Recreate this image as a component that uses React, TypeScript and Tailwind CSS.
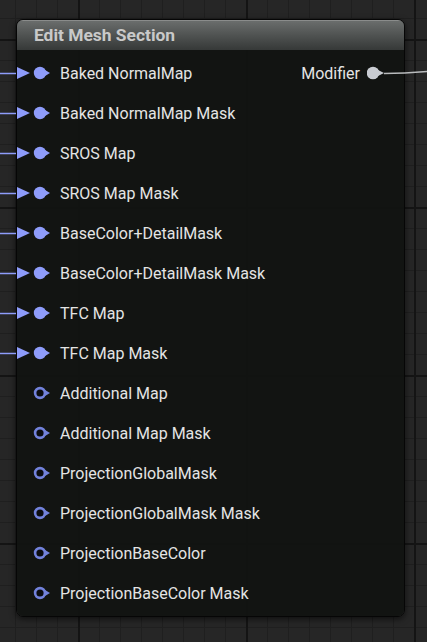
import React from 'react';

type Pin = { label: string; linked: boolean };

const pins: Pin[] = [
  { label: 'Baked NormalMap', linked: true },
  { label: 'Baked NormalMap Mask', linked: true },
  { label: 'SROS Map', linked: true },
  { label: 'SROS Map Mask', linked: true },
  { label: 'BaseColor+DetailMask', linked: true },
  { label: 'BaseColor+DetailMask Mask', linked: true },
  { label: 'TFC Map', linked: true },
  { label: 'TFC Map Mask', linked: true },
  { label: 'Additional Map', linked: false },
  { label: 'Additional Map Mask', linked: false },
  { label: 'ProjectionGlobalMask', linked: false },
  { label: 'ProjectionGlobalMask Mask', linked: false },
  { label: 'ProjectionBaseColor', linked: false },
  { label: 'ProjectionBaseColor Mask', linked: false },
];

const PIN = '#8e9cfb';

// grid canvas behind the node
const GraphGrid: React.FC = () => (
  <svg className="absolute inset-0" width="427" height="642">
    <defs>
      <pattern id="minor" width="21" height="21" x="15" y="18" patternUnits="userSpaceOnUse">
        <rect width="21" height="1" fill="#1f1f1f" />
        <rect width="1" height="21" fill="#1f1f1f" />
      </pattern>
      <pattern id="major" width="168" height="168" x="78" y="39" patternUnits="userSpaceOnUse">
        <rect width="168" height="2" fill="#141414" />
        <rect width="2" height="168" fill="#141414" />
      </pattern>
    </defs>
    <rect width="427" height="642" fill="#262626" />
    <rect width="427" height="642" fill="url(#minor)" />
    <rect width="427" height="642" fill="url(#major)" />
  </svg>
);

// wires drawn over the node
const Wires: React.FC = () => (
  <svg className="absolute inset-0 pointer-events-none" width="427" height="642">
    {pins.map((p, i) =>
      p.linked ? (
        <line key={i} x1="0" x2="16" y1={73.5 + i * 40} y2={73.5 + i * 40} stroke={PIN} strokeWidth="1.5" />
      ) : null
    )}
    <path d="M384 73.5 C 400 73.5, 410 73, 427 71.5" stroke="#b9bbbd" strokeWidth="1.5" fill="none" />
  </svg>
);

const InputPin: React.FC<{ linked: boolean }> = ({ linked }) => (
  <svg width="38" height="16" viewBox="0 0 38 16" className="-ml-[2px] shrink-0">
    {linked && <polygon points="0,1 15,8 0,15" fill={PIN} />}
    {linked ? (
      <circle cx="25" cy="8" r="6.2" fill={PIN} />
    ) : (
      <circle cx="25" cy="8" r="4.9" fill="#0b0c12" stroke="#7282dc" strokeWidth="2.6" />
    )}
    <polygon points="30,5 35,8 30,11" fill={linked ? PIN : '#7282dc'} />
  </svg>
);

const OutputPin: React.FC = () => (
  <svg width="18" height="16" viewBox="0 0 18 16" className="shrink-0">
    <circle cx="6" cy="8" r="6.3" fill="#c9ccd2" />
    <polygon points="11,5 17,8 11,11" fill="#c9ccd2" />
  </svg>
);

export default function App() {
  return (
    <div className="relative w-[427px] h-[642px] overflow-hidden bg-[#262626] font-['Roboto',sans-serif]">
      <GraphGrid />
      <div className="relative ml-[16px] pt-[19px] w-[389px]">
        <div className="rounded-[7px] border border-[#060606] shadow-[0_2px_6px_rgba(0,0,0,0.6)] overflow-hidden">
          <div className="h-[30px] flex items-center pl-[17px] bg-gradient-to-b from-[#6a6d6c] to-[#363938] border-t border-[#8a8c8b]">
            <span className="text-[17.4px] font-bold text-[#c9c9c9]">Edit Mesh Section</span>
          </div>
          <div className="bg-[#111311]/90 pt-[3px] pb-[3px]">
            {pins.map((p, i) => (
              <div key={p.label} className="h-10 flex items-center">
                <InputPin linked={p.linked} />
                <span className="ml-[7px] mt-[2px] text-[16px] text-[#e4e4e4] whitespace-nowrap">{p.label}</span>
                {i === 0 && (
                  <div className="ml-auto flex items-center pr-[19px]">
                    <span className="text-[16px] mt-[2px] text-[#e4e4e4] mr-[7px]">Modifier</span>
                    <OutputPin />
                  </div>
                )}
              </div>
            ))}
          </div>
        </div>
      </div>
      <Wires />
    </div>
  );
}
